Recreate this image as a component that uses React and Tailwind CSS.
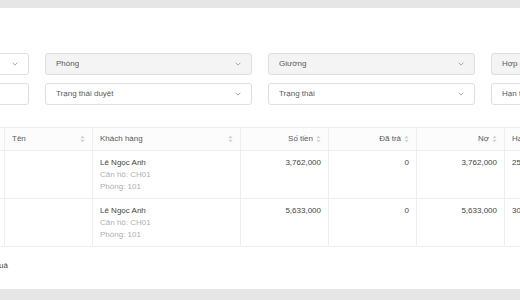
import React from "react";

// Small up/down sort indicator used in table headers
function SortIcon() {
  return (
    <svg width="5" height="8" viewBox="0 0 5 8" className="shrink-0">
      <path d="M2.5 0.6 L4.6 3.2 L0.4 3.2 Z" fill="#cfd2d6" />
      <path d="M2.5 7.4 L4.6 4.8 L0.4 4.8 Z" fill="#cfd2d6" />
    </svg>
  );
}

function Chevron() {
  return (
    <svg width="6" height="4" viewBox="0 0 6 4" className="shrink-0">
      <path d="M0.6 0.7 L3 3.1 L5.4 0.7" fill="none" stroke="#a0a0a0" strokeWidth="0.9" />
    </svg>
  );
}

function Select({ label, disabled, chevron = true }) {
  return (
    <div
      className={`h-[22px] border border-[#dcdfe4] rounded-[3px] px-[10px] flex items-center justify-between text-[8px] text-[#595959] ${
        disabled ? "bg-[#f4f4f5]" : "bg-white"
      }`}
    >
      <span className="truncate">{label}</span>
      {chevron && <Chevron />}
    </div>
  );
}

const rows = [
  { customer: "Lê Ngọc Anh", unit: "CH01", room: "101", amount: "3,762,000", paid: "0", debt: "3,762,000", due: "25/06/2024" },
  { customer: "Lê Ngọc Anh", unit: "CH01", room: "101", amount: "5,633,000", paid: "0", debt: "5,633,000", due: "30/06/2024" },
];

export default function App() {
  const th = "h-[23px] px-[7px] bg-[#fcfcfd] border border-[#eceef2] font-normal text-[#595959] text-[8px]";
  const td = "align-top px-[7px] pt-[6px] border border-[#eceef2] text-[8px] leading-[12px] text-[#444]";

  return (
    <div className="w-[520px] h-[300px] overflow-hidden bg-[#e6e6e6] pt-[8px] font-['Liberation_Sans',Arial,sans-serif]">
      <div className="h-[281px] bg-white overflow-hidden">
        <div className="-ml-[178px] pt-[45px] w-[1100px]">
          {/* Filters */}
          <div className="grid grid-cols-[repeat(4,207px)] gap-x-[16px] gap-y-[8px]">
            <Select label="Căn hộ" />
            <Select label="Phòng" disabled />
            <Select label="Giường" disabled />
            <Select label="Hợp đồng" disabled />
            <Select label="Từ ngày - Đến ngày" chevron={false} />
            <Select label="Trạng thái duyệt" />
            <Select label="Trạng thái" />
            <Select label="Hạn thanh toán" />
          </div>

          {/* Table */}
          <table className="mt-[22px] table-fixed border-collapse w-[752px]">
            <colgroup>
              <col className="w-[182px]" />
              <col className="w-[88px]" />
              <col className="w-[148px]" />
              <col className="w-[88px]" />
              <col className="w-[88px]" />
              <col className="w-[88px]" />
              <col className="w-[70px]" />
            </colgroup>
            <thead>
              <tr>
                <th className={th}></th>
                <th className={th}>
                  <div className="flex items-center justify-between">
                    <span>Tên</span>
                    <SortIcon />
                  </div>
                </th>
                <th className={th}>
                  <div className="flex items-center justify-between">
                    <span>Khách hàng</span>
                    <SortIcon />
                  </div>
                </th>
                {["Số tiền", "Đã trả", "Nợ"].map((h) => (
                  <th key={h} className={th}>
                    <div className="flex items-center justify-end gap-[3px]">
                      <span>{h}</span>
                      <SortIcon />
                    </div>
                  </th>
                ))}
                <th className={`${th} text-left whitespace-nowrap`}>Hạn thanh toán</th>
              </tr>
            </thead>
            <tbody>
              {rows.map((r, i) => (
                <tr key={i} className="h-[48px]">
                  <td className={td}></td>
                  <td className={td}></td>
                  <td className={td}>
                    <div>{r.customer}</div>
                    <div className="text-[#b0b0b0]">Căn hộ: {r.unit}</div>
                    <div className="text-[#b0b0b0]">Phòng: {r.room}</div>
                  </td>
                  <td className={`${td} text-right`}>{r.amount}</td>
                  <td className={`${td} text-right`}>{r.paid}</td>
                  <td className={`${td} text-right`}>{r.debt}</td>
                  <td className={`${td} whitespace-nowrap`}>{r.due}</td>
                </tr>
              ))}
            </tbody>
          </table>

          {/* Footer */}
          <div className="w-[186px] mt-[13px] text-right text-[8px] leading-[12px] text-[#444] whitespace-nowrap">
            Tổng cộng 2 kết quả
          </div>
        </div>
      </div>
    </div>
  );
}
